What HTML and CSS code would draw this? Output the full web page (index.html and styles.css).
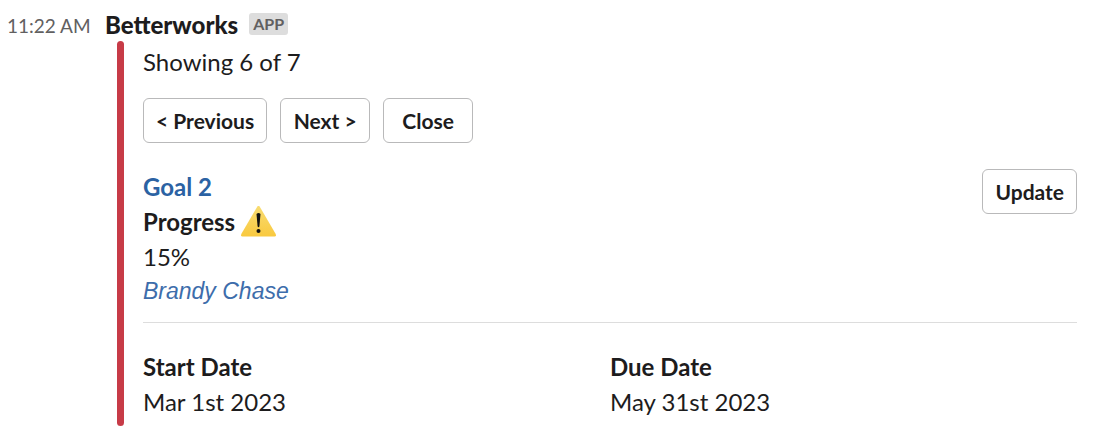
FILE: index.html
```html
<!DOCTYPE html>
<html lang="en">
    <head>
        <meta charset="UTF-8" />
        <meta name="viewport" content="width=device-width, initial-scale=1.0" />
        <title>Betterworks</title>
        <link rel="stylesheet" href="styles.css">
    </head>
    <body>
        <div class="message">
            <time class="time">11:22 AM</time>
            <div class="content">
                <div class="header">
                    <span class="name">Betterworks</span>
                    <span class="badge">APP</span>
                </div>
                <div class="attachment">
                    <p class="showing">Showing 6 of 7</p>
                    <div class="buttons">
                        <button type="button" class="btn">&lt; Previous</button>
                        <button type="button" class="btn">Next &gt;</button>
                        <button type="button" class="btn">Close</button>
                    </div>
                    <div class="goal">
                        <div class="goal-text">
                            <a href="#" class="goal-link">Goal 2</a>
                            <div class="progress">
                                <b>Progress</b>
                                <svg class="warning" viewBox="0 0 36 32" role="img" aria-label="Warning">
                                    <defs>
                                        <linearGradient id="yellow" x1="0" y1="0" x2="0" y2="1">
                                            <stop offset="0" stop-color="#f8dc72" />
                                            <stop offset="1" stop-color="#f9c93f" />
                                        </linearGradient>
                                    </defs>
                                    <path d="M16.200 0.800Q17.500 -1.200 18.800 0.800L34.700 28Q35.500 30.500 33.500 30.500H1.500Q-0.500 30.500 0.300 28Z" fill="url(#yellow)" />
                                    <path d="M15.500 8Q17.500 5.800 19.500 8L18.400 20.500Q17.500 21.900 16.600 20.500Z" fill="#111" />
                                    <circle cx="17.500" cy="24.900" r="2" fill="#111" />
                                </svg>
                            </div>
                            <div class="percent">15%</div>
                            <a href="#" class="owner">Brandy Chase</a>
                        </div>
                        <button type="button" class="btn">Update</button>
                    </div>
                    <div class="dates">
                        <div class="date"><b>Start Date</b><span>Mar 1st 2023</span></div>
                        <div class="date"><b>Due Date</b><span>May 31st 2023</span></div>
                    </div>
                </div>
            </div>
        </div>
    </body>
</html>
```
FILE: styles.css
```css
* {
    box-sizing: border-box;
}

body {
    margin: 0;
    background-color: #fff;
    color: #1d1c1d;
    font-family: Lato, "Liberation Sans", sans-serif;
    font-size: 24px;
    line-height: 35px;
}

.message {
    display: flex;
    padding: 8px 19px 16px 7px;
}

.time {
    flex: 0 0 98px;
    font-size: 19px;
    color: #616061;
}

.content {
    flex: 1;
}

.header {
    display: flex;
    align-items: center;
    gap: 11px;
    height: 33px;
}

.name {
    font-weight: 900;
}

.badge {
    margin-bottom: 2px;
    padding: 0 4px;
    border-radius: 3px;
    background-color: #dddddd;
    color: #616061;
    font-size: 16px;
    font-weight: 700;
    line-height: 22px;
}

.attachment {
    position: relative;
    margin-left: 12px;
    padding: 3px 0 7px 26px;
}

/* colored bar on the left */
.attachment::before {
    content: "";
    position: absolute;
    top: 0;
    bottom: 0;
    left: 0;
    width: 7px;
    border-radius: 4px;
    background-color: #c73b47;
}

.showing {
    margin: 0 0 19px;
}

.buttons {
    display: flex;
    gap: 13px;
}

.btn {
    min-width: 90px;
    height: 45px;
    padding: 0 12px 1px;
    border: 1px solid #b9b9ba;
    border-radius: 6px;
    background-color: #fff;
    color: #1d1c1d;
    font-family: inherit;
    font-size: 21px;
    font-weight: 700;
}

.goal {
    display: flex;
    justify-content: space-between;
    align-items: flex-start;
    margin-top: 26px;
    padding-bottom: 14px;
    border-bottom: 1px solid #dddddd;
}

.goal-text {
    display: flex;
    flex-direction: column;
    align-items: flex-start;
}

.goal-link {
    color: #2b62a3;
    font-weight: 700;
    text-decoration: none;
}

.progress {
    display: flex;
    align-items: center;
    gap: 6px;
}

.warning {
    width: 36px;
    height: 32px;
}

.owner {
    color: #3d6dab;
    font-family: "Liberation Sans", sans-serif;
    font-size: 23px;
    font-style: italic;
    line-height: 34px;
    text-decoration: none;
}

.dates {
    display: grid;
    grid-template-columns: 1fr 1fr;
    padding-top: 26px;
}

.date {
    display: flex;
    flex-direction: column;
}
```
